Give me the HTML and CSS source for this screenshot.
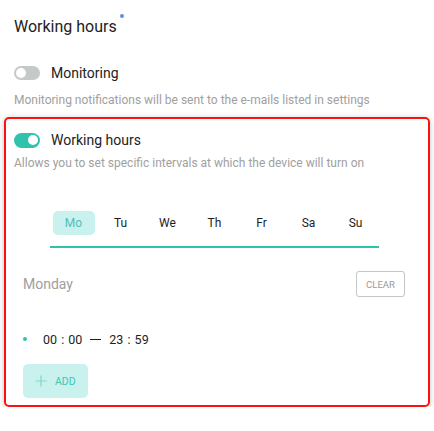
FILE: index.html
```html
<!DOCTYPE html>
<html>
<head>
<meta charset="utf-8">
<link rel="stylesheet" href="styles.css">
</head>
<body>
<div class="page">
  <h1 class="title">Working hours<span class="dot"></span></h1>
  <div class="row monitoring">
    <span class="toggle off"><span class="knob"></span></span>
    <span class="label">Monitoring</span>
  </div>
  <p class="desc outer">Monitoring notifications will be sent to the e-mails listed in settings</p>
  <div class="card">
    <div class="row">
      <span class="toggle on"><span class="knob"></span></span>
      <span class="label">Working hours</span>
    </div>
    <p class="desc inner">Allows you to set specific intervals at which the device will turn on</p>
    <div class="tabs">
      <div class="tab active"><span>Mo</span></div>
      <div class="tab"><span>Tu</span></div>
      <div class="tab"><span>We</span></div>
      <div class="tab"><span>Th</span></div>
      <div class="tab"><span>Fr</span></div>
      <div class="tab"><span>Sa</span></div>
      <div class="tab"><span>Su</span></div>
    </div>
    <div class="day-head">
      <span class="day-name">Monday</span>
      <button class="clear">CLEAR</button>
    </div>
    <div class="interval">
      <span class="bullet"></span>
      <span class="time">00 : 00</span>
      <span class="dash"></span>
      <span class="time">23 : 59</span>
    </div>
    <button class="add">
      <svg width="12" height="12" viewBox="0 0 12 12"><path d="M6 0.5V11.5M0.5 6H11.5" stroke="#7fd8cf" stroke-width="1.2" fill="none"/></svg>
      <span>ADD</span>
    </button>
  </div>
</div>
</body>
</html>
```

FILE: styles.css
```css
html, body {
  margin: 0;
  padding: 0;
  background: #ffffff;
}
body {
  font-family: Roboto, "Liberation Sans", sans-serif;
  color: #222222;
}
.page {
  width: 434px;
  padding-top: 17px;
}
.title {
  margin: 0 0 0 14px;
  font-size: 16px;
  font-weight: 400;
  line-height: 20px;
  color: #222;
}
.dot {
  display: inline-block;
  width: 4px;
  height: 4px;
  border-radius: 50%;
  background: #5a8ee8;
  vertical-align: top;
  margin-left: 3px;
  margin-top: -3px;
}
.row {
  display: flex;
  align-items: center;
  height: 20px;
}
.monitoring {
  margin: 26px 0 0 14px;
}
.toggle {
  position: relative;
  display: inline-block;
  width: 26px;
  height: 14px;
  border-radius: 7px;
  flex: none;
}
.toggle.off { background: #c5c9c7; }
.toggle.on { background: #2fc3ae; height: 15px; border-radius: 8px; }
.knob {
  position: absolute;
  top: 2px;
  width: 10px;
  height: 10px;
  border-radius: 50%;
  background: #fff;
}
.toggle.off .knob { left: 2px; }
.toggle.on .knob { right: 2px; top: 2.5px; }
.label {
  margin-left: 11px;
  font-size: 14px;
  color: #222;
}
.desc {
  margin: 0;
  font-size: 12px;
  line-height: 16px;
  color: #a0a0a0;
  white-space: nowrap;
}
.desc.outer {
  margin: 9px 0 0 14px;
}
.card {
  margin: 9px 4px 0 4px;
  border: 2px solid #ff1010;
  border-radius: 5px;
  box-shadow: 0 1px 6px rgba(0,0,0,0.22);
  padding: 11px 0 7px 8px;
}
.desc.inner {
  margin-top: 5px;
}
.tabs {
  display: flex;
  margin: 40px 0 0 36px;
  width: 329px;
  border-bottom: 2px solid #2fc3ae;
  padding-bottom: 11px;
}
.tab {
  width: 47px;
  display: flex;
  justify-content: center;
}
.tab span {
  width: 42px;
  height: 24px;
  line-height: 24px;
  text-align: center;
  font-size: 12px;
  color: #1e1e1e;
  border-radius: 5px;
}
.tab.active span {
  background: #c9f2ee;
  color: #56bdb3;
}
.day-head {
  display: flex;
  justify-content: space-between;
  align-items: center;
  margin: 23px 23px 0 9px;
  height: 26px;
}
.day-name {
  font-size: 14px;
  color: #9e9e9e;
}
.clear {
  width: 49px;
  height: 26px;
  border: 1px solid #c2c6c5;
  border-radius: 3px;
  background: #fff;
  font-family: Roboto, "Liberation Sans", sans-serif;
  font-size: 9.5px;
  color: #9a9a9a;
  padding: 0;
}
.interval {
  display: flex;
  align-items: center;
  height: 20px;
  margin: 32px 0 0 9px;
  font-size: 12.5px;
  color: #1e1e1e;
  word-spacing: 1px;
}
.bullet {
  width: 4px;
  height: 4px;
  border-radius: 50%;
  background: #2fc3ae;
  margin-left: 0;
  margin-right: 16px;
}
.dash {
  width: 11px;
  height: 1px;
  background: #1e1e1e;
  margin: 0 8px 0 8px;
}
.add {
  display: flex;
  align-items: center;
  margin: 15px 0 0 9px;
  width: 65px;
  height: 34px;
  border: none;
  border-radius: 5px;
  background: #c9f2ee;
  padding: 0 0 0 12px;
  font-family: Roboto, "Liberation Sans", sans-serif;
  font-size: 10.5px;
  color: #3cc7b6;
}
.add svg {
  margin-right: 8px;
}
```
